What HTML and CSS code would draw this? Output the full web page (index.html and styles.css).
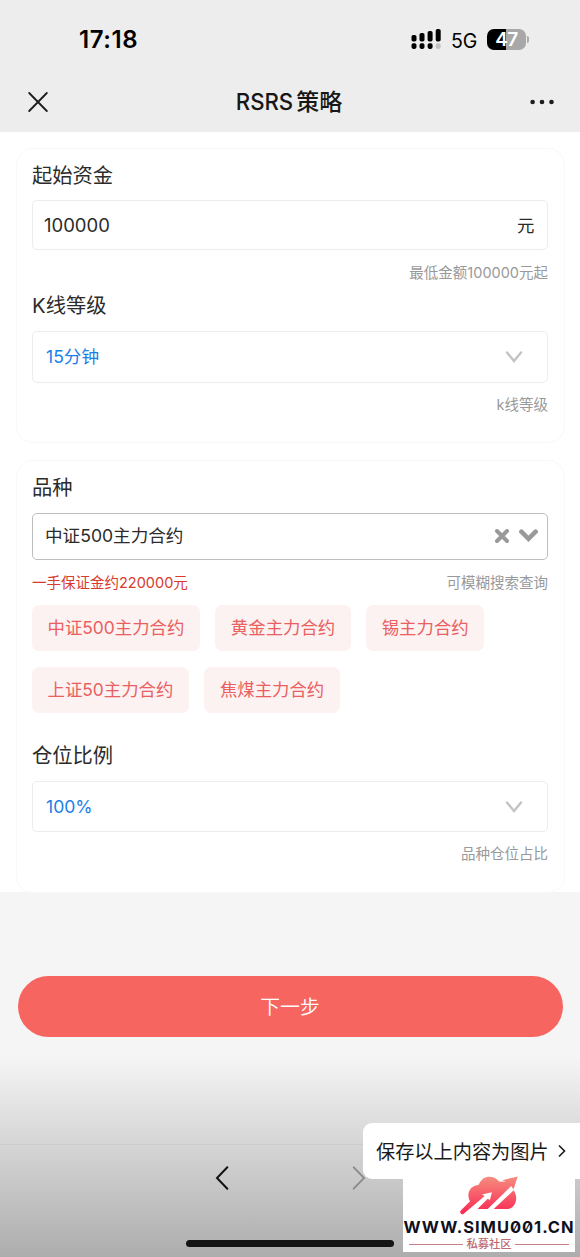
FILE: index.html
```html
<!DOCTYPE html>
<html lang="zh-CN">
<head>
<meta charset="utf-8">
<meta name="viewport" content="width=device-width, initial-scale=1">
<title>RSRS策略</title>
<link rel="stylesheet" href="styles.css">
</head>
<body>
<div class="screen">
  <header class="header">
    <div class="status">
      <span class="time">17:18</span>
      <div class="status-right">
        <svg class="signal" width="31" height="22" viewBox="0 0 31 22">
          <g fill="#000">
            <rect x="0.5" y="7" width="5" height="6.6" rx="1.8"/><rect x="8.5" y="5" width="5" height="8.6" rx="1.8"/><rect x="16.6" y="3" width="5" height="10.6" rx="1.8"/><rect x="24.7" y="1" width="5" height="12.6" rx="1.8"/>
            <rect x="0.5" y="15.3" width="5" height="5.6" rx="1.8"/><rect x="8.5" y="15.3" width="5" height="5.6" rx="1.8"/><rect x="16.6" y="15.3" width="5" height="5.6" rx="1.8"/>
          </g>
          <rect x="24.7" y="15.3" width="5" height="5.6" rx="1.8" fill="#c2c2c2"/>
        </svg>
        <span class="network">5G</span>
        <div class="battery"><span class="battery-body">47</span><span class="battery-tip"></span></div>
      </div>
    </div>
    <nav class="navbar">
      <svg width="20" height="20" viewBox="0 0 20 20" fill="none" stroke="#1c1c1c" stroke-width="1.8" stroke-linecap="round"><path d="M1.2 1L18.8 19M18.8 1L1.2 19"/></svg>
      <h1 class="title"><span>RSRS</span>策略</h1>
      <svg width="24" height="6" viewBox="0 0 24 6" fill="#1c1c1c"><circle cx="2.6" cy="3" r="2.3"/><circle cx="12" cy="3" r="2.3"/><circle cx="21.5" cy="3" r="2.3"/></svg>
    </nav>
  </header>

  <main class="content">
    <section class="card card-funds">
      <h2 class="label">起始资金</h2>
      <div class="field input"><span class="amount">100000</span><span>元</span></div>
      <p class="hint">最低金额100000元起</p>
      <h2 class="label label-k">K线等级</h2>
      <div class="field picker">
        <span>15分钟</span>
        <svg width="18" height="12" viewBox="0 0 18 12" fill="none" stroke="#c4c4c4" stroke-width="2.4" stroke-linecap="round"><path d="M2 1.5L9 10L16 1.5"/></svg>
      </div>
      <p class="hint hint-tight">k线等级</p>
    </section>

    <section class="card card-variety">
      <h2 class="label">品种</h2>
      <div class="field combo">
        <span>中证500主力合约</span>
        <div class="combo-icons">
          <svg width="14" height="14" viewBox="0 0 14 14" stroke="#999" stroke-width="3.9" stroke-linecap="round"><path d="M2 2L12 12M12 2L2 12"/></svg>
          <svg width="19" height="14" viewBox="0 0 19 14" fill="none" stroke="#999" stroke-width="4.6" stroke-linecap="round"><path d="M2.4 2.7L9.5 9.8L16.6 2.7"/></svg>
        </div>
      </div>
      <div class="notes"><span class="margin-note">一手保证金约220000元</span><span>可模糊搜索查询</span></div>
      <div class="chips">
        <span class="chip">中证500主力合约</span>
        <span class="chip">黄金主力合约</span>
        <span class="chip">锡主力合约</span>
        <span class="chip">上证50主力合约</span>
        <span class="chip">焦煤主力合约</span>
      </div>
      <h2 class="label">仓位比例</h2>
      <div class="field picker picker-ratio">
        <span>100%</span>
        <svg width="18" height="12" viewBox="0 0 18 12" fill="none" stroke="#c4c4c4" stroke-width="2.4" stroke-linecap="round"><path d="M2 1.5L9 10L16 1.5"/></svg>
      </div>
      <p class="hint hint-tight">品种仓位占比</p>
    </section>
  </main>

  <div class="action"><button class="next">下一步</button></div>

  <footer class="footer">
    <div class="toolbar">
      <svg width="14" height="24" viewBox="0 0 14 24" fill="none" stroke="#111" stroke-width="2" stroke-linecap="round"><path d="M12.3 1.3L2 12L12.3 22.7"/></svg>
      <svg width="14" height="24" viewBox="0 0 14 24" fill="none" stroke="#888" stroke-width="1.8" stroke-linecap="round"><path d="M1.7 1.3L12 12L1.7 22.7"/></svg>
    </div>
    <div class="home-bar"></div>
  </footer>

  <div class="save-tip">
    <span>保存以上内容为图片</span>
    <svg width="8" height="14" viewBox="0 0 8 14" fill="none" stroke="#1a1a1a" stroke-width="1.6"><path d="M1 1.5L6.500 7L1 12.5"/></svg>
  </div>
  <aside class="brand">
    <svg class="brand-logo" width="60" height="40" viewBox="0 0 60 40">
      <defs><linearGradient id="cloud" gradientUnits="userSpaceOnUse" x1="0" y1="2" x2="0" y2="38"><stop offset="0" stop-color="#f68c7e"/><stop offset="1" stop-color="#f82b55"/></linearGradient></defs>
      <g fill="url(#cloud)">
        <path d="M1.500 35.700L11 26.200C8.700 22 8.700 17 12.200 13Q15.200 10 19.700 9.800C22.200 4 26.200 1.800 30.200 1.800Q36.200 1.800 40.200 6.600L46.700 6.800L43.400 5.300L58.700 1.400L54.500 14.300L52.200 11L28.700 34L18.500 34L28.700 23.800L30.900 25L32.900 17.300L22.900 19.600L25.700 21L4.700 38.700Q3.200 40 1.900 38.400Q.6 37 1.500 35.700Z"/>
        <path d="M34.700 34L54.700 15.300C58.200 21 57.700 26 55.200 30Q52.700 34 47.700 34Z"/>
      </g>
    </svg>
    <div class="brand-url">WWW.SIMU001.CN</div>
    <div class="brand-sub"><i></i><span>私募社区</span><i></i></div>
  </aside>
</div>
</body>
</html>
```
FILE: styles.css
```css
* { box-sizing: border-box; }
body { margin: 0; }
h1, h2, p { margin: 0; font-weight: inherit; }

.screen {
  position: relative;
  display: flex;
  flex-direction: column;
  width: 580px;
  height: 1257px;
  overflow: hidden;
  background: linear-gradient(to bottom, #f5f5f5 0, #f5f5f5 1057px, #d6d6d6 1142px, #adadad 1257px);
  color: #2b2b2b;
  font-family: Inter, "Noto Sans CJK SC", sans-serif;
  font-size: 17.4px;
  font-weight: 380;
}

.header { height: 132px; background: #ededed; }
.status {
  display: flex;
  justify-content: space-between;
  align-items: center;
  height: 78px;
  padding: 0 51px 0 79px;
  color: #000;
}
.time { font-size: 24px; font-weight: 600; letter-spacing: 0.6px; }
.status-right { display: flex; align-items: center; }
.network { width: 27px; margin-left: 9px; padding-top: 3px; font-size: 19.5px; font-weight: 400; line-height: 22px; white-space: nowrap; }
.battery { display: flex; align-items: center; margin-left: 9px; }
.battery-body {
  display: flex;
  align-items: center;
  justify-content: center;
  width: 39px;
  height: 21px;
  border-radius: 7px;
  background: linear-gradient(to right, #000 48%, #a8a8a8 48%);
  color: #fff;
  font-size: 19px;
  font-weight: 600;
  letter-spacing: -0.5px;
}
.battery-tip { width: 2px; height: 7px; margin-left: 1px; border-radius: 0 3px 3px 0; background: #aaa; }
.navbar {
  display: flex;
  align-items: center;
  justify-content: space-between;
  height: 48px;
  padding: 0 26px 0 28px;
}
.title { display: flex; align-items: center; gap: 3px; font-size: 23px; font-weight: 500; color: #171717; line-height: 30px; }
.title span { font-size: 22.2px; }

.content { display: flex; flex-direction: column; gap: 17px; height: 760px; padding: 16px 15.5px 0; background: #fff; }
.card { flex: none; padding: 12px 15.5px 0; border: 1.5px solid #f8f8f8; border-radius: 17px; background: #fff; }
.card-funds { height: 295px; }
.card-variety { height: 433px; }
.label { height: 30px; line-height: 30px; font-size: 20.3px; }
.field { display: flex; align-items: center; justify-content: space-between; border: 1px solid #ececec; border-radius: 5px; }
.input { height: 50px; margin-top: 9px; padding: 0 12.5px 2px 11px; }
.amount { padding-top: 2px; font-size: 18.5px; }
.hint { margin-top: 11px; height: 22px; line-height: 23px; font-size: 14.5px; color: #999; text-align: right; }
.hint-tight { margin-top: 10px; }
.label-k { margin-top: 8px; }
.picker { height: 52px; margin-top: 10px; padding: 0 24px 0 13px; color: #1c7ee8; }
.picker span { padding-bottom: 3px; font-size: 17.6px; }
.picker-ratio { height: 51px; }
.picker-ratio span { padding-bottom: 1px; }
.combo { height: 47px; margin-top: 10px; padding: 0 9px 2px 12px; border: 1.3px solid #bdbdbd; font-size: 17.6px; }
.combo > span { padding-bottom: 2px; }
.combo-icons { display: flex; align-items: center; gap: 10px; }
.notes { display: flex; justify-content: space-between; height: 22px; margin: 11px 0 12px; line-height: 23px; font-size: 14.5px; color: #999; }
.margin-note { color: #d83a2d; }
.chips { display: flex; flex-wrap: wrap; gap: 16px 15.5px; margin-bottom: 28px; }
.chip { height: 46px; padding: 0 15.5px; border-radius: 7px; background: #fdf2f2; color: #e9605f; line-height: 45px; white-space: nowrap; }

.action { padding: 84px 17.5px 0; }
.next {
  display: block;
  width: 545px;
  height: 61px;
  padding: 0 0 3px;
  border: 0;
  border-radius: 31px;
  background: #f76560;
  color: #fff;
  font: 350 19.8px Inter, "Noto Sans CJK SC", sans-serif;
}

.footer { display: flex; flex-direction: column; align-items: center; margin-top: 107px; border-top: 1px solid #cccccc; }
.toolbar { display: flex; justify-content: space-between; width: 151px; height: 95px; padding-top: 21px; }
.home-bar { width: 208px; height: 7px; border-radius: 4px; background: #141414; }

.save-tip {
  position: absolute;
  left: 363px;
  top: 1123px;
  display: flex;
  align-items: center;
  gap: 9px;
  width: 217px;
  height: 56px;
  padding-left: 13px;
  border-radius: 9px 0 0 9px;
  background: #fff;
  color: #1a1a1a;
  font-size: 19.2px;
  white-space: nowrap;
}
.brand {
  position: absolute;
  left: 403px;
  top: 1174px;
  display: flex;
  flex-direction: column;
  align-items: center;
  width: 172px;
  height: 78px;
  background: #fff;
}
.brand-logo { margin-top: 1px; flex: none; }
.brand-url {
  height: 20px;
  padding-top: 2px;
  color: #11111d;
  font-size: 16.5px;
  font-weight: 700;
  font-feature-settings: "zero";
  letter-spacing: 0.95px;
  line-height: 20px;
  white-space: nowrap;
}
.brand-sub { display: flex; align-items: center; gap: 3px; width: 160px; height: 18px; color: #bd6a73; font-size: 11.3px; font-weight: 500; line-height: 18px; white-space: nowrap; }
.brand-sub i { flex: 1; height: 1px; background: #c9808a; }
```
